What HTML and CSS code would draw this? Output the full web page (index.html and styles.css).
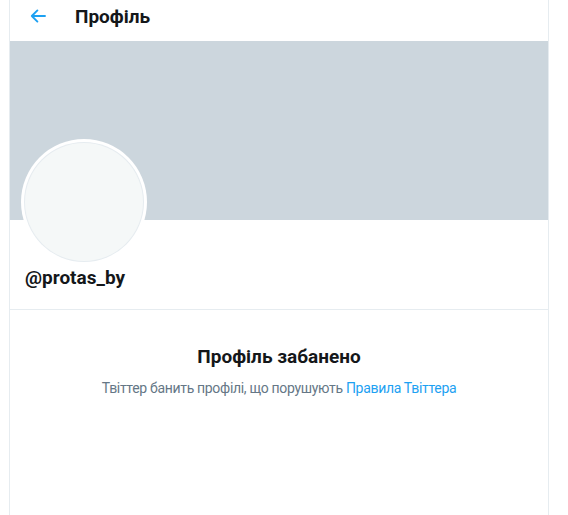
FILE: index.html
```html
<!DOCTYPE html>
<html lang="uk">
<head>
<meta charset="utf-8">
<title>Профіль</title>
<link rel="stylesheet" href="styles.css">
</head>
<body>
<div class="column">
  <header class="header">
    <button class="back" aria-label="Назад">
      <svg viewBox="0 0 16 16" width="16" height="16"><path d="M15 8H1.8M7.4 2.4L1.8 8l5.6 5.6" fill="none" stroke="#1da1f2" stroke-width="1.9" stroke-linecap="round" stroke-linejoin="round"/></svg>
    </button>
    <h1 class="title">Профіль</h1>
  </header>
  <div class="banner"></div>
  <section class="profile">
    <div class="avatar"><div class="avatar-inner"></div></div>
    <div class="handle">@protas_by</div>
  </section>
  <section class="banned">
    <h2 class="banned-title">Профіль забанено</h2>
    <p class="banned-text">Твіттер банить профілі, що порушують <a href="#" class="link">Правила Твіттера</a></p>
  </section>
</div>
</body>
</html>
```
FILE: styles.css
```css
html, body {
  margin: 0;
  padding: 0;
  background: #ffffff;
}
body {
  font-family: Roboto, "Open Sans", sans-serif;
  color: #14171a;
}
.column {
  margin-left: 9px;
  width: 538px;
  min-height: 515px;
  border-left: 1px solid #e6ecf0;
  border-right: 1px solid #e6ecf0;
}
.header {
  height: 41px;
  box-sizing: border-box;
  padding: 0 0 9px 20px;
  display: flex;
  align-items: center;
}
.back {
  border: 0;
  background: none;
  padding: 0;
  width: 16px;
  height: 16px;
  display: flex;
  margin-right: 29px;
}
.title {
  margin: 0;
  font-size: 19px;
  font-weight: 700;
  line-height: 1;
}
.banner {
  height: 179px;
  background: #ccd6dd;
}
.profile {
  display: flex;
  flex-direction: column;
  align-items: flex-start;
  padding: 0 11px 19px;
  border-bottom: 1px solid #e6ecf0;
}
.avatar {
  width: 126px;
  height: 126px;
  margin-top: -81px;
  border-radius: 50%;
  background: #ffffff;
  padding: 4px;
  box-sizing: border-box;
}
.avatar-inner {
  width: 100%;
  height: 100%;
  border-radius: 50%;
  background: #f5f8f8;
  box-shadow: 0 0 0 1px #e6ecf0;
}
.handle {
  margin-top: 0;
  padding-left: 4px;
  font-size: 19px;
  font-weight: 700;
  line-height: 25px;
}
.banned {
  text-align: center;
  padding-top: 34px;
}
.banned-title {
  margin: 0;
  font-size: 19px;
  font-weight: 700;
  line-height: 26px;
}
.banned-text {
  margin: 8px 0 0;
  font-size: 14px;
  line-height: 20px;
  letter-spacing: -0.32px;
  color: #657786;
}
.link {
  color: #1da1f2;
  text-decoration: none;
}
```
